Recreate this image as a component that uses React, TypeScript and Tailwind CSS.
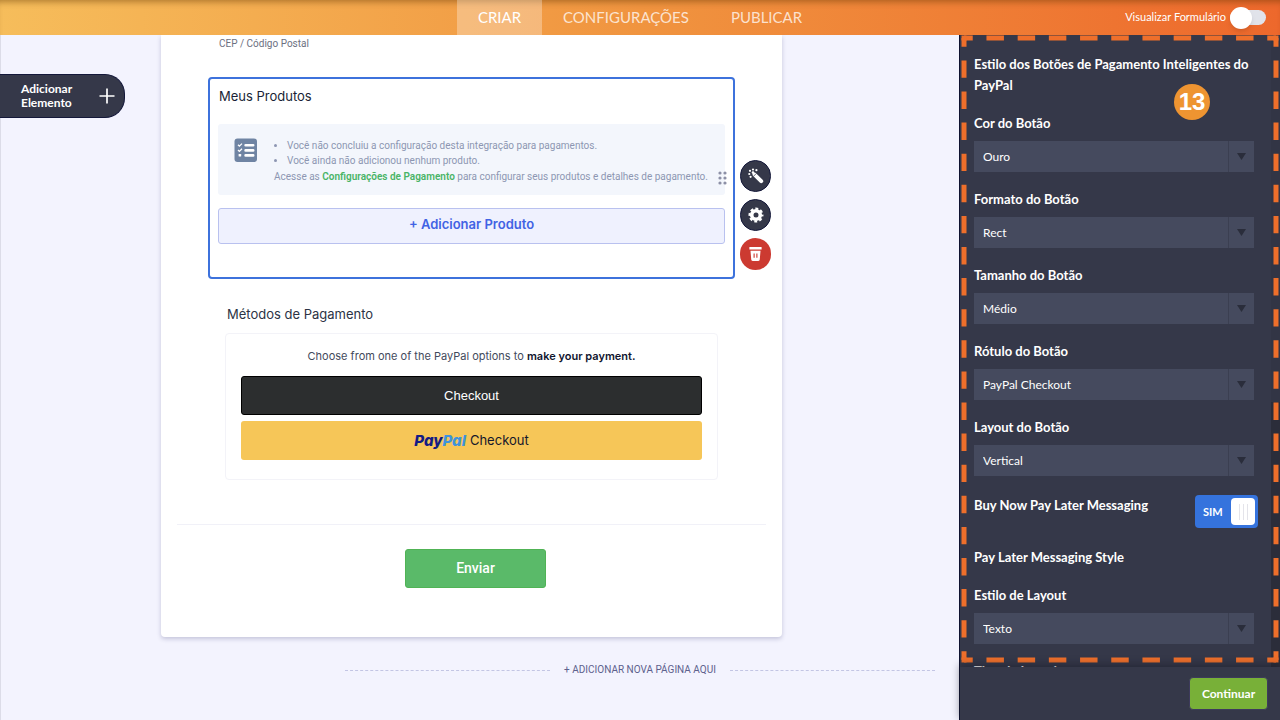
import React from 'react';

const buttonFields = [
  { id: 'color', label: 'Cor do Botão', value: 'Ouro' },
  { id: 'shape', label: 'Formato do Botão', value: 'Rect' },
  { id: 'size', label: 'Tamanho do Botão', value: 'Médio' },
  { id: 'label', label: 'Rótulo do Botão', value: 'PayPal Checkout' },
  { id: 'layout', label: 'Layout do Botão', value: 'Vertical' },
];

function WandIcon() {
  return (
    <svg width="16" height="16" viewBox="0 0 16 16" fill="#fff">
      <path d="M6.6 6.6L13.2 13.2" stroke="#fff" strokeWidth="4" strokeLinecap="round" />
      <path d="M5.4 8.4L8.4 5.4" stroke="#353849" strokeWidth="0.7" />
      <circle cx="5" cy="1.5" r="1.1" />
      <circle cx="8.4" cy="2.2" r="1.1" />
      <circle cx="2" cy="2.8" r="1.1" />
      <circle cx="5" cy="4.6" r="1.3" />
      <circle cx="1.3" cy="6" r="1.1" />
      <circle cx="2.6" cy="8.8" r="1.1" />
    </svg>
  );
}

function GearIcon() {
  return (
    <svg width="16" height="16" viewBox="0 0 16 16" fill="none">
      <circle cx="8" cy="8" r="4.3" stroke="#fff" strokeWidth="3.6" />
      <circle cx="8" cy="8" r="6.4" stroke="#fff" strokeWidth="2.2" strokeDasharray="2.9 2.13" strokeDashoffset="1.45" />
    </svg>
  );
}

function TrashIcon() {
  return (
    <svg width="13" height="16" viewBox="0 0 14 16" fill="#fff">
      <path d="M1 0.5H13a0.6 0.6 0 0 1 0.6 0.6V3.2H0.4V1.1A0.6 0.6 0 0 1 1 0.5z" />
      <path d="M1.6 4.4h10.8l-0.8 9.4a2 2 0 0 1-2 1.7H4.4a2 2 0 0 1-2-1.7z" />
      <path d="M5.5 7.5v4.5M8.5 7.5v4.5" stroke="#cc3a31" strokeWidth="1.2" />
    </svg>
  );
}

function ChecklistIcon() {
  return (
    <svg width="24" height="24" viewBox="0 0 24 24" fill="none" className="shrink-0">
      <rect x="0.5" y="0.5" width="22.5" height="23.5" rx="3" fill="#6f84a3" />
      <path d="M4 6.8l1.4 1.4L8 5.6M4 12l1.4 1.4L8 10.8" stroke="#fff" strokeWidth="1.3" />
      <rect x="4.6" y="16" width="2.6" height="2.6" rx="0.6" fill="#fff" />
      <path d="M11.6 7.2h7.6M11.6 12.4h7.6M11.6 17.4h7.6" stroke="#fff" strokeWidth="2.6" strokeLinecap="round" />
    </svg>
  );
}

function SelectField({ id, label, value }: { id: string; label: string; value: string }) {
  return (
    <div>
      <label htmlFor={id} className="block text-[13px] leading-[21px] font-bold">{label}</label>
      <div className="relative mt-[7px]">
        <select id={id} defaultValue={value} className="block w-full h-[31px] appearance-none bg-[#454a5e] pl-[9px] pr-8 text-[12px] text-white">
          <option>{value}</option>
        </select>
        <span className="pointer-events-none absolute inset-y-0 right-0 flex w-[26px] items-center justify-center border-l border-[#3b3f51]">
          <svg width="9" height="7" viewBox="0 0 9 7" fill="#2a2d3b"><path d="M0 0h9L4.5 7z" /></svg>
        </span>
      </div>
    </div>
  );
}

// dashed frame drawn over the settings panel
function Highlight() {
  const corners = [['0', '0'], ['100%', '0'], ['0', '100%'], ['100%', '100%']];
  return (
    <div className="pointer-events-none absolute inset-x-1 top-[3px] bottom-[7px]">
      <svg className="h-full w-full overflow-visible" stroke="#ee6f2b" strokeWidth="5">
        <line x1="0" y1="0" x2="100%" y2="0" pathLength="100" strokeDasharray="5.6 4.4" strokeDashoffset="2.8" />
        <line x1="0" y1="100%" x2="100%" y2="100%" pathLength="100" strokeDasharray="5.6 4.4" strokeDashoffset="2.8" />
        <line x1="0" y1="0" x2="0" y2="100%" pathLength="200" strokeDasharray="5.6 4.4" strokeDashoffset="2.8" />
        <line x1="100%" y1="0" x2="100%" y2="100%" pathLength="200" strokeDasharray="5.6 4.4" strokeDashoffset="2.8" />
        {corners.map(([x, y]) => (
          <rect key={x + y} x={x} y={y} width="5" height="5" transform="translate(-2.5 -2.5)" fill="#ee6f2b" stroke="none" />
        ))}
      </svg>
    </div>
  );
}

function Header() {
  return (
    <header className="relative z-10 grid h-[35px] shrink-0 grid-cols-[1fr_auto_1fr] bg-linear-to-r from-[#f6bd5b] via-[#f0943f] to-[#ed682c] shadow-[inset_0_6px_6px_-4px_rgba(90,50,0,0.45)]">
      <nav className="col-start-2 flex text-[15px] text-white/75">
        <a href="#" className="flex items-center bg-white/30 px-[21px] text-white">CRIAR</a>
        <a href="#" className="flex items-center px-[21px]">CONFIGURAÇÕES</a>
        <a href="#" className="flex items-center px-[21px]">PUBLICAR</a>
      </nav>
      <label className="flex items-center justify-end gap-1 pr-[14px] text-[11px] text-white">
        Visualizar Formulário
        <input type="checkbox" className="peer sr-only" />
        <span className="flex h-[15px] w-9 items-center rounded-full bg-[#e1e3ea]">
          <span className="h-[22px] w-[22px] shrink-0 rounded-full bg-white shadow-md" />
        </span>
      </label>
    </header>
  );
}

function ProductsBlock() {
  return (
    <section className="relative mt-[26px] rounded-[4px] border-2 border-[#3d72dc] px-2 pt-[7px] pb-[33px]">
      <h2 className="pl-px text-[13px] leading-5 text-[#1a1f36]">Meus Produtos</h2>
      <div className="mt-[18px] flex h-[71px] rounded-[3px] bg-[#f3f6fc] pt-[14px] pl-4 font-['Roboto',sans-serif] text-[10px] text-[#8d96b2]">
        <ChecklistIcon />
        <div className="pl-4 whitespace-nowrap">
          <ul className="list-disc pl-[13px] leading-[15px]">
            <li>Você não concluiu a configuração desta integração para pagamentos.</li>
            <li>Você ainda não adicionou nenhum produto.</li>
          </ul>
          <p className="leading-[17px]">
            Acesse as <a href="#" className="font-semibold text-[#49b466]">Configurações de Pagamento</a> para configurar seus produtos e detalhes de pagamento.
          </p>
        </div>
      </div>
      <button className="mt-[13px] h-9 w-full rounded-[3px] border border-[#b9c1ef] bg-[#eff1fe] pb-0.5 text-[13px] font-semibold text-[#4163e4]">
        + Adicionar Produto
      </button>
      <svg width="10" height="14" viewBox="0 0 10 14" fill="#8d90a6" className="absolute top-[92px] right-[5px]">
        <circle cx="2" cy="2" r="1.6" /><circle cx="7" cy="2" r="1.6" />
        <circle cx="2" cy="7" r="1.6" /><circle cx="7" cy="7" r="1.6" />
        <circle cx="2" cy="12" r="1.6" /><circle cx="7" cy="12" r="1.6" />
      </svg>
      <div className="absolute top-[81px] left-full ml-[7px] flex flex-col gap-[7px]">
        <button aria-label="Assistente" className="flex h-8 w-[31px] items-center justify-center rounded-full border border-[#14183a] bg-[#353849]"><WandIcon /></button>
        <button aria-label="Configurações" className="flex h-8 w-[31px] items-center justify-center rounded-full border border-[#14183a] bg-[#353849]"><GearIcon /></button>
        <button aria-label="Excluir" className="flex h-8 w-[31px] items-center justify-center rounded-full bg-[#cc3a31]"><TrashIcon /></button>
      </div>
    </section>
  );
}

function PaymentMethods() {
  return (
    <section className="mx-[17px] mt-[25px]">
      <h2 className="pl-[2px] text-[13px] leading-5 text-[#2c3345]">Métodos de Pagamento</h2>
      <div className="mt-[9px] rounded-[4px] border border-[#f3f3f8] px-[15px] pt-3 pb-[19px]">
        <p className="text-center text-[11px] leading-5 text-[#434a5c]">
          Choose from one of the PayPal options to <strong className="font-semibold text-[#10152e]">make your payment.</strong>
        </p>
        <button className="mt-[10px] block h-[39px] w-full rounded-[3px] border border-black bg-[#2c2e2f] font-['Liberation_Sans',sans-serif] text-[13px] text-white">
          Checkout
        </button>
        <button className="mt-[6px] flex h-[39px] w-full items-center justify-center gap-1 rounded-[3px] bg-[#f6c658] text-[13px] text-[#15172b]">
          <span className="text-[15px] leading-5 font-extrabold text-[#141c84] italic">Pay<span className="text-[#3f93dc]">Pal</span></span>
          Checkout
        </button>
      </div>
    </section>
  );
}

function SettingsPanel() {
  return (
    <aside className="flex w-[321px] shrink-0 flex-col border-l border-[#0e1230] bg-[#353849] text-white">
      <div className="relative min-h-0 flex-1">
        <div className="flex h-full overflow-hidden">
          <div className="flex flex-1 flex-col gap-[17px] pt-[19px] pr-[17px] pl-[14px]">
            <h2 className="text-[13px] leading-[21px] font-bold">Estilo dos Botões de Pagamento Inteligentes do PayPal</h2>
            {buttonFields.map((field) => (
              <SelectField key={field.id} {...field} />
            ))}
            <label className="-mr-1 flex items-start justify-between py-[2px] text-[13px] leading-[21px] font-bold">
              Buy Now Pay Later Messaging
              <input type="checkbox" defaultChecked className="sr-only" />
              <span className="flex h-[33px] w-[63px] items-center justify-between rounded-[4px] bg-[#3573dd] pr-[3px] pl-2 text-[11px]">
                SIM
                <span className="flex h-[27px] w-6 items-center justify-center gap-[3px] rounded-[4px] bg-white">
                  <i className="h-4 w-px bg-[#e4e4ea]" />
                  <i className="h-4 w-px bg-[#e4e4ea]" />
                  <i className="h-4 w-px bg-[#e4e4ea]" />
                </span>
              </span>
            </label>
            <h2 className="text-[13px] leading-[21px] font-bold">Pay Later Messaging Style</h2>
            <SelectField id="later-layout" label="Estilo de Layout" value="Texto" />
            <SelectField id="logo-type" label="Tipo de Logotipo" value="Primário" />
          </div>
          {/* scrollbar */}
          <div className="w-[9px] shrink-0 bg-[#2b2d3a]">
            <div className="h-[58%] bg-[#323545]" />
          </div>
        </div>
        <Highlight />
        <span className="absolute top-[49px] right-[70px] flex h-9 w-9 items-center justify-center rounded-full bg-[#ee9431] font-['Liberation_Sans',sans-serif] text-[24px] leading-6 font-bold">13</span>
      </div>
      <div className="relative flex h-[53px] items-center justify-end bg-[#353849] pr-3 shadow-[0_-2px_8px_rgba(20,20,30,0.45)]">
        <button className="h-[33px] w-[79px] rounded-[4px] border border-[#3d3a5c] bg-[#78b038] text-[12px] font-bold">Continuar</button>
      </div>
    </aside>
  );
}

export default function App() {
  return (
    <div className="flex h-screen flex-col overflow-hidden bg-[#f3f3fe] font-['Lato',sans-serif]">
      <Header />
      <div className="flex min-h-0 flex-1">
        <main className="relative min-w-0 flex-1 overflow-hidden shadow-[inset_1px_0_#dcdce8]">
          <button className="absolute top-[39px] left-0 flex h-11 w-[125px] items-center justify-between rounded-r-[20px] border border-l-0 border-[#14183a] bg-[#353849] pr-[9px] pl-[21px] text-left text-[12px] leading-[14px] font-bold text-white">
            <span>Adicionar<br />Elemento</span>
            <svg width="16" height="16" viewBox="0 0 16 16" stroke="#fff" strokeWidth="1.7"><path d="M8 0.5v15M0.5 8h15" /></svg>
          </button>

          <div className="pr-4">
            <form className="mx-auto w-[621px] rounded-b-[4px] bg-white pb-[49px] font-['Inter',sans-serif] shadow-[0_2px_4px_rgba(60,60,110,0.25)]">
              <div className="px-[47px] pt-[2px]">
                <p className="pl-[11px] font-['Roboto',sans-serif] text-[10px] leading-[14px] text-[#6c7081]">CEP / Código Postal</p>
                <ProductsBlock />
                <PaymentMethods />
              </div>
              <hr className="mx-4 mt-11 border-[#f1f1f8]" />
              <div className="mt-6 flex justify-center pl-2">
                <button type="button" className="h-[39px] w-[141px] rounded-[3px] border border-[#50b355] bg-[#5aba69] font-['Roboto',sans-serif] text-[14px] font-medium text-white">Enviar</button>
              </div>
            </form>
          </div>

          <div className="mt-[25px] mr-6 ml-[345px] flex items-center gap-[14px]">
            <span className="flex-1 border-t border-dashed border-[#c3c5e4]" />
            <a href="#" className="font-['Roboto',sans-serif] text-[10px] leading-4 text-[#5d618d]">+ ADICIONAR NOVA PÁGINA AQUI</a>
            <span className="flex-1 border-t border-dashed border-[#c3c5e4]" />
          </div>
        </main>
        <SettingsPanel />
      </div>
    </div>
  );
}
